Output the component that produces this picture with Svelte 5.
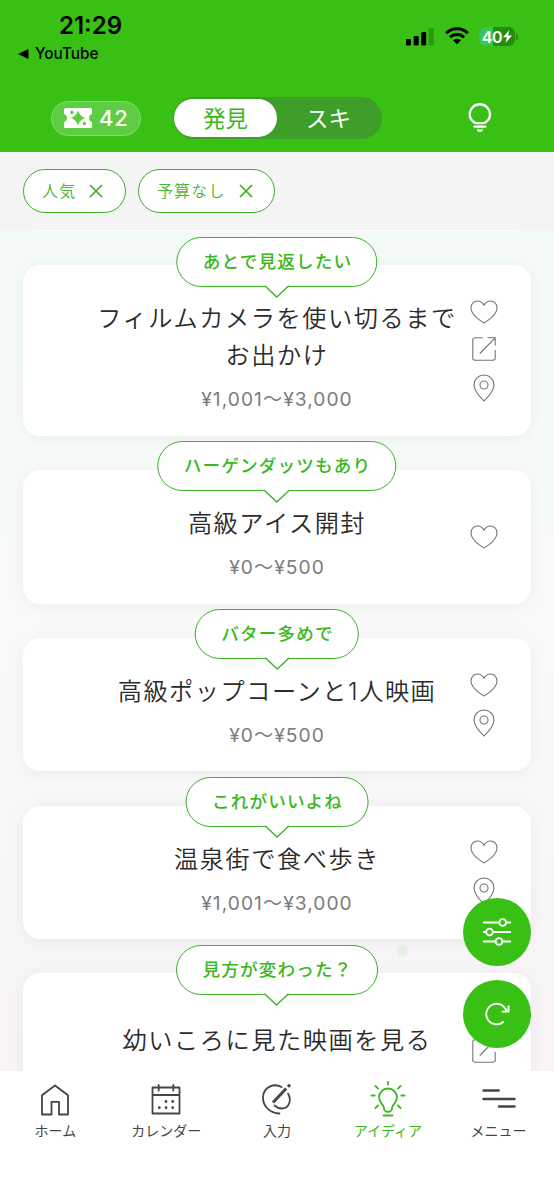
<script lang="ts">
  type Icon = 'heart' | 'link' | 'pin';

  interface Idea {
    comment: string;
    title: string;
    price?: string;
    icons: Icon[];
  }

  const ideas: Idea[] = [
    {
      comment: 'あとで見返したい',
      title: 'フィルムカメラを使い切るまでお出かけ',
      price: '¥1,001〜¥3,000',
      icons: ['heart', 'link', 'pin']
    },
    { comment: 'ハーゲンダッツもあり', title: '高級アイス開封', price: '¥0〜¥500', icons: ['heart'] },
    { comment: 'バター多めで', title: '高級ポップコーンと1人映画', price: '¥0〜¥500', icons: ['heart', 'pin'] },
    { comment: 'これがいいよね', title: '温泉街で食べ歩き', price: '¥1,001〜¥3,000', icons: ['heart', 'pin'] },
    { comment: '見方が変わった？', title: '幼いころに見た映画を見る', icons: ['heart', 'link', 'pin'] }
  ];

  let filters = $state(['人気', '予算なし']);
  let tab = $state('発見');
  let page = $state('アイディア');

  const pages = ['ホーム', 'カレンダー', '入力', 'アイディア', 'メニュー'];

  function removeFilter(name: string) {
    filters = filters.filter((f) => f !== name);
  }
</script>

<div class="app">
  <header>
    <div class="status">
      <div class="clock">
        <span class="time">21:29</span>
        <span class="back">
          <svg width="11" height="10" viewBox="0 0 11 10"><path d="M0 5 10.5 0v10z" /></svg>
          YouTube
        </span>
      </div>
      <div class="signals">
        <svg width="28" height="18" viewBox="0 0 28 18">
          <rect x="0" y="11" width="5" height="6.5" rx="1.3" />
          <rect x="7.7" y="8" width="5" height="9.5" rx="1.3" />
          <rect x="15.2" y="4" width="5" height="13.5" rx="1.3" />
          <rect x="22.7" y="0" width="5" height="17.5" rx="1.3" opacity=".22" />
        </svg>
        <svg class="wifi" width="24" height="18" viewBox="0 0 24 18">
          <path d="M1.2 6.2a15.3 15.3 0 0 1 21.6 0M5 10.3a9.9 9.9 0 0 1 14 0" fill="none" stroke="#000" stroke-width="3" />
          <path d="M8 13.3a5.8 5.8 0 0 1 8 0L12 17.3z" />
        </svg>
        <div class="battery">
          <span>40</span>
          <svg width="9" height="13" viewBox="0 0 9 13"><path d="M6.4 0 0 7.3h3.8L2.5 13 9 5.4H5.1z" fill="#fff" /></svg>
        </div>
      </div>
    </div>

    <div class="toolbar">
      <div class="tickets">
        <svg width="28" height="20" viewBox="0 0 28 20">
          <path
            fill="#fff"
            fill-rule="evenodd"
            d="M1.5 0h25Q28 0 28 1.5V6a4.2 4.2 0 0 0 0 8v4.5Q28 20 26.500 20h-25Q0 20 0 18.500V14a4.200 4.200 0 0 0 0-8V1.500Q0 0 1.500 0zM14 2.200Q15.600 8.500 21.500 10 15.600 11.500 14 17.800 12.400 11.500 6.500 10 12.400 8.500 14 2.200zM7.800 2.600a1.700 1.700 0 1 0 .01 0zM20.500 13.800a1.700 1.700 0 1 0 .01 0z"
          />
        </svg>
        <span>42</span>
      </div>
      <div class="switch">
        {#each ['発見', 'スキ'] as name}
          <button class:active={tab === name} onclick={() => (tab = name)}>{name}</button>
        {/each}
      </div>
      <button class="hint" aria-label="ヒント">
        <svg width="24" height="30" viewBox="0 0 24 30" fill="none" stroke="#fff" stroke-width="2.3">
          <path d="M8 20.200C4.200 18.500 1.700 15.600 1.700 11.400a10 10 0 0 1 20.300 0c0 4.200-2.500 7.100-6.300 8.800z" stroke-linejoin="round" />
          <path d="M6.500 23.700h10.800" stroke-linecap="round" />
          <path d="M8.500 26.200h6.800l-2 2.800h-2.800z" fill="#fff" stroke="none" />
        </svg>
      </button>
    </div>
  </header>

  <div class="filters">
    {#each filters as name}
      <button class="chip" onclick={() => removeFilter(name)}>
        {name}
        <svg width="14" height="14" viewBox="0 0 14 14"><path d="M1 1l12 12M13 1 1 13" stroke="#34b41c" stroke-width="1.7" /></svg>
      </button>
    {/each}
  </div>

  <main>
    <div class="peek"></div>
    <i class="dot"></i>
    {#each ideas as idea}
      <article>
        <div class="bubble">
          {idea.comment}
          <svg width="25" height="13" viewBox="0 0 25 13">
            <path d="M1 .5 12.500 11.800 24 .5V0H1z" fill="#fff" />
            <path d="M.5 .8 12.500 12 24.500 .8" fill="none" stroke="#3ab226" stroke-width="1.3" />
          </svg>
        </div>
        <div class="text" class:untagged={!idea.price}>
          <h2>{idea.title}</h2>
          {#if idea.price}
            <p>{idea.price}</p>
          {/if}
        </div>
        <div class="icons">
          {#each idea.icons as icon}
            {#if icon === 'heart'}
              <svg width="28" height="24" viewBox="0 0 28 24">
                <path d="M14 23C8.500 19.300 1 14.500 1 7.800 1 3.800 3.900 1 7.400 1c3 0 5.300 1.700 6.600 4.300C15.300 2.700 17.600 1 20.600 1 24.100 1 27 3.800 27 7.800 27 14.500 19.500 19.300 14 23z" />
              </svg>
            {:else if icon === 'link'}
              <svg width="24" height="24" viewBox="0 0 24 24">
                <path d="M11 .8H3Q.8 .8 .8 3v18q0 2.200 2.200 2.200h18q2.200 0 2.200-2.200V13M15.500 .8h7.700v7.700M23.200 .8 7.800 16.500" />
              </svg>
            {:else}
              <svg width="22" height="28" viewBox="0 0 22 28">
                <path d="M11 27C7 23 1 17.500 1 11a10 10 0 0 1 20 0c0 6.500-6 12-10 16z" />
                <circle cx="11" cy="11" r="4" />
              </svg>
            {/if}
          {/each}
        </div>
      </article>
    {/each}
  </main>

  <nav>
    {#each pages as name, i}
      <button class:active={page === name} onclick={() => (page = name)}>
        <svg width="36" height="38" viewBox="0 0 36 38">
          {#if i === 0}
            <path d="M5 14.300 18 4.500l13 9.800v19.200h-9v-12.700h-7.500v12.700H5z" />
          {:else if i === 1}
            <path d="M4.500 6.500h27v26h-27zM4.500 14h27M10.700 4v5.500M25.300 4v5.500" />
            <path d="M18 20.500h.01M24.700 20.500h.01M11.300 26.700h.01M18 26.700h.01M24.700 26.700h.01" class="dots" />
          {:else if i === 2}
            <path d="M22.500 6C15 1.800 4.500 6 4 16c-.3 9.500 7 16 16.500 16.500M29 12.500c4 6.500 1 14.500-5.500 15-3 .2-6-1.200-8-3" />
            <path d="M27.200 7.500 14 21.500" class="pen" />
            <path d="M30 4.800h.01" class="dots tip" />
          {:else if i === 3}
            <path d="M14 27.500c0-4.500-5-5.500-5-11a9 9 0 0 1 18 0c0 5.500-5 6.500-5 11a4 3.300 0 0 1-8 0zM13.500 34.500h9M18 1v2.500M5.500 5l2.600 2.600M30.500 5l-2.600 2.600M1.500 14.500h3.200M31.300 14.500h3.200M5.500 27l2.600-2.600M30.500 27l-2.600-2.600" />
          {:else}
            <path d="M2.500 9.500h15.200M2.500 18h31M18 25.500h15.500" class="bars" />
          {/if}
        </svg>
        {name}
      </button>
    {/each}
  </nav>

  <div class="fabs">
    <button aria-label="絞り込み">
      <svg width="30" height="28" viewBox="0 0 30 28">
        <path d="M1 4.500h28M1 14h28M1 23.500h28" />
        <circle cx="20.700" cy="4.500" r="3.400" />
        <circle cx="7.500" cy="14" r="3.400" />
        <circle cx="17" cy="23.500" r="3.400" />
      </svg>
    </button>
    <button aria-label="更新">
      <svg width="26" height="24" viewBox="0 0 26 24">
        <path d="M19.800 19.400A10.300 10.300 0 1 1 22.500 9.300M24.500 3.500V9.600h-6.800" fill="none" />
      </svg>
    </button>
  </div>
</div>

<style>
  :global(body) {
    margin: 0;
  }

  .app {
    position: relative;
    display: flex;
    flex-direction: column;
    width: 554px;
    height: 1199px;
    overflow: hidden;
    font-family: Inter, 'Noto Sans CJK JP', sans-serif;
  }

  button {
    margin: 0;
    padding: 0;
    border: none;
    background: none;
    font: inherit;
    color: inherit;
    cursor: pointer;
  }

  svg {
    display: block;
    flex: none;
  }

  header {
    height: 152px;
    flex: none;
    background: #38c014;
  }

  .status {
    display: flex;
    justify-content: space-between;
    height: 97px;
    padding: 0 38px 0 18px;
    box-sizing: border-box;
  }

  .clock {
    display: flex;
    flex-direction: column;
    padding-top: 11px;
  }

  .time {
    margin-left: 41px;
    font-size: 24px;
    font-weight: 600;
    line-height: 30px;
  }

  .back {
    display: flex;
    align-items: center;
    gap: 6px;
    font-size: 15.3px;
    font-weight: 500;
    line-height: 25px;
  }

  .signals {
    display: flex;
    gap: 10.5px;
    padding-top: 28px;
  }

  .signals > svg:first-child {
    margin-right: 0.5px;
  }

  .wifi {
    margin-top: -1px;
  }

  .battery {
    position: relative;
    display: flex;
    align-items: center;
    justify-content: center;
    gap: 1px;
    width: 36px;
    height: 19px;
    margin: -1px 1px 0 0;
    border-radius: 6px;
    background: linear-gradient(90deg, #35c65a 40%, #288a10 40%);
    color: #fff;
    font-size: 16px;
    font-weight: 600;
    letter-spacing: -0.3px;
  }

  .battery::after {
    content: '';
    position: absolute;
    right: -3px;
    top: 7px;
    width: 2px;
    height: 6px;
    border-radius: 0 2px 2px 0;
    background: #288a10;
  }

  .toolbar {
    display: flex;
    align-items: center;
    height: 42px;
    padding-left: 51px;
  }

  .tickets {
    display: flex;
    align-items: center;
    gap: 7px;
    width: 90px;
    height: 35px;
    padding-left: 12px;
    box-sizing: border-box;
    border: 1px solid #84da6d;
    border-radius: 18px;
    background: #5fcd43;
    color: #fff;
    font-size: 22px;
    font-weight: 500;
    letter-spacing: 0.8px;
  }

  .switch {
    display: flex;
    width: 209px;
    height: 42px;
    margin-left: 32px;
    padding: 2px;
    box-sizing: border-box;
    border-radius: 21px;
    background: #3d9f29;
  }

  .switch button {
    flex: 1;
    height: 38px;
    padding-top: 1px;
    box-sizing: border-box;
    border-radius: 19px;
    color: #fff;
    font-size: 22.5px;
    line-height: 37px;
  }

  .switch .active {
    margin-left: -1px;
    background: #fff;
    color: #38b81c;
  }

  .hint {
    margin-left: 86px;
  }

  .filters {
    display: flex;
    gap: 12px;
    height: 78px;
    flex: none;
    padding: 17px 23px;
    box-sizing: border-box;
    background: #f4f4f4;
  }

  .chip {
    display: flex;
    align-items: center;
    gap: 13px;
    height: 44px;
    padding: 0 21.5px 0 18px;
    box-sizing: border-box;
    border: 1.6px solid #3ab226;
    border-radius: 22px;
    background: #fff;
    color: #4bb435;
    font-size: 16px;
    font-weight: 350;
    line-height: 40px;
    letter-spacing: 1.2px;
  }

  main {
    position: relative;
    display: flex;
    flex-direction: column;
    gap: 34.25px;
    flex: 1;
    min-height: 0;
    padding: 0 23px;
    overflow: hidden;
    background: linear-gradient(180deg, #f3faf6 0%, #f8faf8 45%, #f8f6f8 75%, #f7f3f6 100%);
  }

  .peek {
    flex: none;
    height: 1px;
    margin: 0 12px;
    background: #fff;
    box-shadow: 0 3px 16px rgba(0, 0, 0, 0.07);
  }

  .dot {
    position: absolute;
    left: 397px;
    top: 715px;
    width: 11px;
    height: 11px;
    border-radius: 50%;
    background: #e4f2e2;
  }

  article {
    position: relative;
    display: grid;
    grid-template-columns: 67px 1fr 67px;
    align-items: center;
    flex: none;
    border-radius: 17px;
    background: #fff;
    box-shadow: 0 2px 16px rgba(0, 0, 0, 0.05);
  }

  .bubble {
    position: absolute;
    left: 50%;
    top: -28.7px;
    height: 50px;
    padding: 0 24.5px 0 25.5px;
    box-sizing: border-box;
    transform: translateX(-50%);
    border: 1.6px solid #3ab226;
    border-radius: 25px;
    background: #fff;
    color: #38b81c;
    font-size: 17.6px;
    font-weight: 500;
    line-height: 47px;
    letter-spacing: 1.15px;
    white-space: nowrap;
  }

  .bubble svg {
    position: absolute;
    left: calc(50% - 12.5px);
    top: 47.2px;
  }

  .text {
    grid-column: 2;
    padding: 35px 0 24.5px;
    text-align: center;
  }

  .untagged {
    align-self: start;
    padding: 48.5px 0 0;
  }

  h2 {
    margin: 0 -2px;
    color: #2b2b2b;
    font-size: 24.2px;
    font-weight: 350;
    line-height: 37px;
    letter-spacing: 1.55px;
  }

  p {
    margin: 13px 0 0;
    color: #7c7c7c;
    font-size: 19.2px;
    line-height: 24px;
    letter-spacing: 1.05px;
  }

  .icons {
    display: flex;
    flex-direction: column;
    align-items: center;
    gap: 12.8px;
    width: 40px;
    padding: 29px 0 28px;
    fill: none;
    stroke: #757575;
    stroke-width: 1.1;
  }

  nav {
    position: relative;
    display: flex;
    height: 128px;
    flex: none;
    padding-top: 10px;
    box-sizing: border-box;
    background: #fff;
  }

  nav button {
    display: flex;
    flex: 1;
    flex-direction: column;
    align-items: center;
    gap: 1px;
    height: 64px;
    color: #454545;
    font-size: 14px;
    line-height: 22px;
  }

  nav .active {
    color: #38b81c;
  }

  nav svg {
    fill: none;
    stroke: currentColor;
    stroke-width: 1.8;
    stroke-linecap: round;
    stroke-linejoin: round;
  }

  nav .dots {
    stroke-width: 2.8;
  }

  nav .pen {
    stroke-width: 3;
    stroke-linecap: butt;
  }

  nav .tip {
    stroke-width: 3.4;
  }

  nav .bars {
    stroke-width: 2.4;
  }

  .fabs {
    position: absolute;
    right: 23px;
    top: 898px;
    display: flex;
    flex-direction: column;
    gap: 14px;
  }

  .fabs button {
    display: flex;
    align-items: center;
    justify-content: center;
    width: 68px;
    height: 68px;
    border-radius: 50%;
    background: #38c014;
  }

  .fabs svg {
    fill: #38c014;
    stroke: #fff;
    stroke-width: 1.9;
  }
</style>
